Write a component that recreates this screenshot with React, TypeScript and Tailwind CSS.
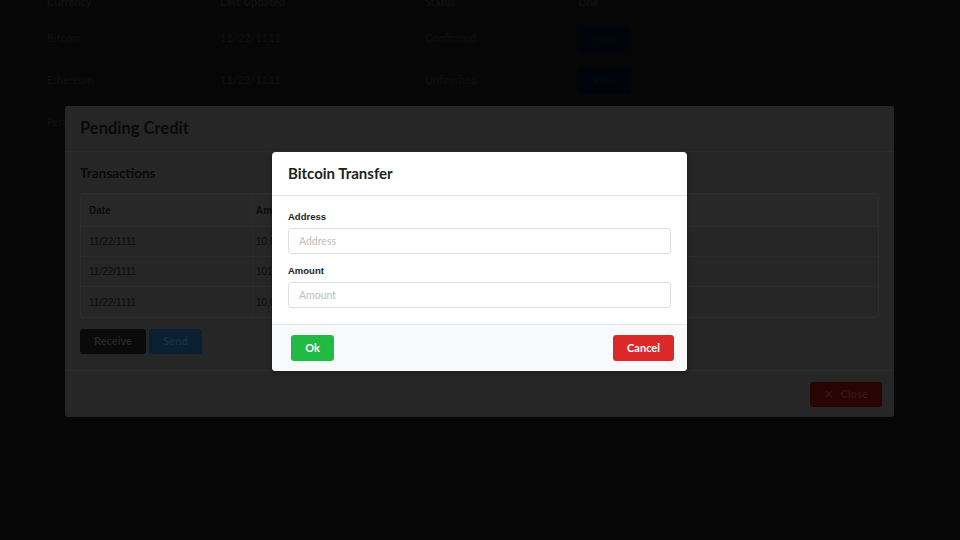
import React from "react";

const lato = "font-['Lato',sans-serif]";
const arial = "font-['Liberation_Sans',Arial,sans-serif]";

function BgRow({ a, b, c, btn }: { a: string; b: string; c: string; btn?: boolean }) {
  return (
    <div className="grid grid-cols-[173px_205px_153px_1fr] h-[42px] items-center text-[11px] text-[#101010]">
      <div>{a}</div>
      <div>{b}</div>
      <div>{c}</div>
      <div>
        {btn && (
          <div className="w-[53px] h-[27px] rounded-[3px] bg-[#01050b] flex items-center justify-center text-[10px] text-[#030a14]">
            View
          </div>
        )}
      </div>
    </div>
  );
}

export default function App() {
  return (
    <div className={`relative w-[960px] h-[540px] overflow-hidden bg-[#060606] ${lato}`}>
      {/* Background page table */}
      <div className="pl-[47px] pr-[40px]">
        <div className="grid grid-cols-[173px_205px_153px_1fr] h-[30px] -mt-[13px] items-center text-[11px] font-bold text-[#101010]">
          <div>Currency</div>
          <div>Last Updated</div>
          <div>Status</div>
          <div>Link</div>
        </div>
        <BgRow a="Bitcoin" b="11/22/1111" c="Confirmed" btn />
        <BgRow a="Ethereum" b="11/22/1111" c="Unfinished" btn />
        <BgRow a="Pending" b="11/22/1111" c="Pending" />
      </div>

      {/* Pending Credit modal (dimmed) */}
      <div className="absolute left-[65px] top-[106px] w-[829px] h-[311px] bg-[#262626] rounded-[3px] flex flex-col">
        <div className="h-[46px] px-[15px] flex items-center border-b border-[#2c2c2c]">
          <div className="text-[16.5px] font-bold text-[#0a0a0a]">Pending Credit</div>
        </div>
        <div className="flex-1 px-[15px] pt-[12px] border-b border-[#2c2c2c]">
          <div className="text-[13.5px] leading-[18px] font-bold text-[#0a0a0a] mb-[11px]">Transactions</div>
          <div className={`border border-[#2d2d2d] rounded-[3px] ${arial} text-[10px] text-[#0c0c0c]`}>
            <div className="grid grid-cols-[172px_1fr] h-[33px] items-center bg-[#282828] border-b border-[#2d2d2d] font-bold">
              <div className="pl-[8px] border-r border-[#2b2b2b] h-full flex items-center">Date</div>
              <div className="pl-[3px]">Amount</div>
            </div>
            {["10,000", "101,000", "10,000"].map((amt, i) => (
              <div
                key={i}
                className={`grid grid-cols-[172px_1fr] h-[30px] items-center ${i < 2 ? "border-b border-[#2b2b2b]" : ""}`}
              >
                <div className="pl-[8px] border-r border-[#2b2b2b] h-full flex items-center">11/22/1111</div>
                <div className="pl-[3px]">{amt}</div>
              </div>
            ))}
          </div>
          <div className="flex gap-[3px] mt-[11px]">
            <div className="w-[66px] h-[25px] rounded-[3px] bg-[#0a0a0a] flex items-center justify-center text-[11px] font-bold text-[#262626]">
              Receive
            </div>
            <div className="w-[53px] h-[25px] rounded-[3px] bg-[#0a2032] flex items-center justify-center text-[11px] font-bold text-[#12304a]">
              Send
            </div>
          </div>
        </div>
        <div className="h-[46px] flex items-center justify-end pr-[12px]">
          <div className="w-[72px] h-[25px] rounded-[3px] bg-[#280505] flex items-center justify-center gap-[7px] text-[11px] font-bold text-[#3d1212]">
            <span className="text-[11px]">✕</span>
            <span>Close</span>
          </div>
        </div>
      </div>

      {/* Bitcoin Transfer modal */}
      <div className="absolute left-[272px] top-[152px] w-[415px] h-[219px] bg-white rounded-[4px] shadow-[0_1px_4px_rgba(0,0,0,0.4)] flex flex-col overflow-hidden">
        <div className="h-[44px] px-[16px] flex items-center border-b border-[#e6e6e6]">
          <div className="text-[15px] font-bold text-[#222]">Bitcoin Transfer</div>
        </div>
        <div className="flex-1 px-[16px] pt-[15px]">
          <div className={`${arial} text-[9.5px] leading-[12px] font-bold text-[#222] mb-[4px]`}>Address</div>
          <input
            placeholder="Address"
            className={`w-full h-[26px] border border-[#dedede] rounded-[3px] px-[10px] text-[10.5px] ${lato} outline-none placeholder:text-[#bdbdbd]`}
          />
          <div className={`${arial} text-[9.5px] leading-[12px] font-bold text-[#222] mt-[11px] mb-[4px]`}>Amount</div>
          <input
            placeholder="Amount"
            className={`w-full h-[26px] border border-[#dedede] rounded-[3px] px-[10px] text-[10.5px] ${lato} outline-none placeholder:text-[#bdbdbd]`}
          />
        </div>
        <div className="h-[47px] border-t border-[#e3e5e8] bg-[#f8f9fa] flex items-center justify-between pl-[19px] pr-[13px]">
          <div className="w-[43px] h-[26px] rounded-[3px] bg-[#21ba45] flex items-center justify-center text-[11px] font-bold text-white">
            Ok
          </div>
          <div className="w-[61px] h-[26px] rounded-[3px] bg-[#db2828] flex items-center justify-center text-[11px] font-bold text-white">
            Cancel
          </div>
        </div>
      </div>
    </div>
  );
}
